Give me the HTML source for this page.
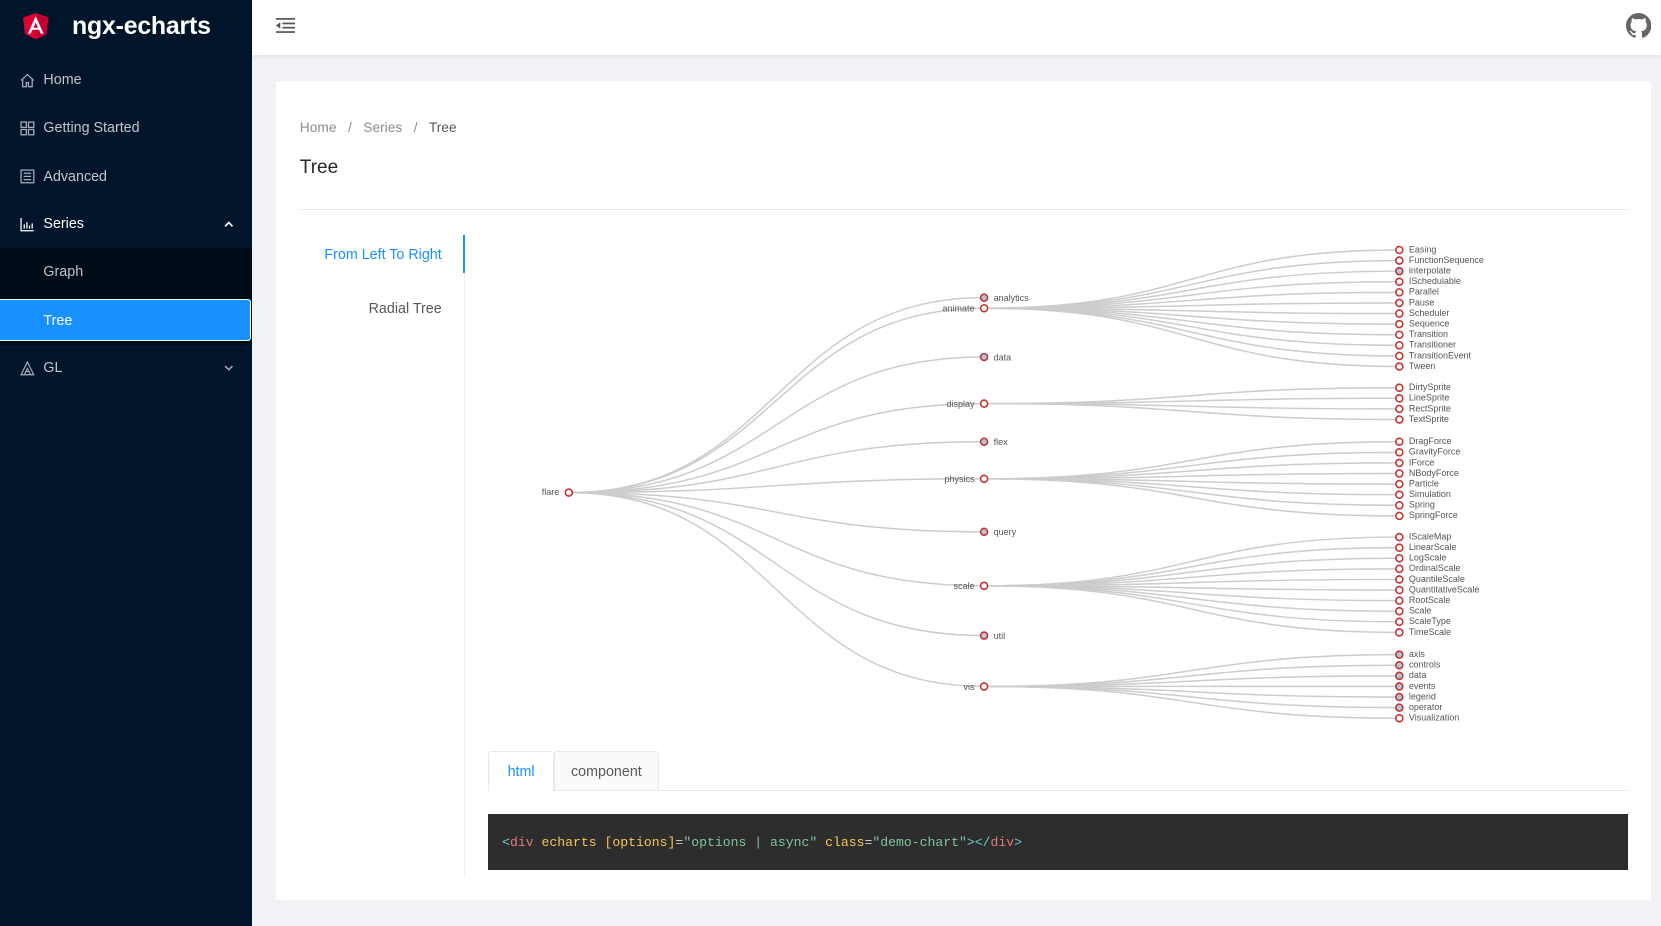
<!DOCTYPE html>
<html><head><meta charset="utf-8"><style>
html,body{margin:0;padding:0;overflow:hidden}
body{zoom:1.0593;width:1568px;height:874px;background:#f0f2f5;font-family:"Liberation Sans",sans-serif;position:relative}
.side{position:absolute;left:0;top:0;width:238px;height:874px;background:#001529}
.logo{position:absolute;left:22px;top:12px}
.brand{position:absolute;left:68px;top:11px;color:#fff;font-size:23.5px;font-weight:bold;letter-spacing:-0.2px}
.mi{position:absolute;left:0;width:238px;height:44px;color:rgba(255,255,255,.75);font-size:13.5px;line-height:46px}
.mi span{position:absolute;left:41px}
.mi svg{position:absolute;left:19px;top:16px}
.sub{position:absolute;left:0;top:234px;width:238px;height:92px;background:#000c17}
.sel{position:absolute;left:0;top:282px;width:236px;height:38px;background:#1890ff;border:1px solid #fff;border-left:none;border-radius:0 3px 3px 0;color:#fff;font-size:13.5px;line-height:40px}
.head{position:absolute;left:238px;top:0;right:0;height:52px;background:#fff;box-shadow:0 1px 4px rgba(0,21,41,.08)}
.card{position:absolute;left:261px;top:76px;width:1298px;height:774px;background:#fff}
.bc{position:absolute;left:22px;top:37px;font-size:13px;color:#8c8c8c}
.bc b{font-weight:normal;color:#595959}
.title{position:absolute;left:22px;top:72px;font-size:18px;color:#262626}
.hr{position:absolute;left:22px;right:22px;top:121px;height:1px;background:#e8e8e8}
.vl{position:absolute;left:177px;top:146px;width:1px;height:606px;background:#f0f0f0}
.va{position:absolute;left:176px;top:146px;width:2px;height:36px;background:#1890ff}
.t1{position:absolute;right:1142px;top:157px;font-size:13.5px;color:#1890ff}
.t2{position:absolute;right:1142px;top:208px;font-size:13.5px;color:#595959}
.tabs{position:absolute;left:200px;top:633px;width:1076px;height:37px;border-bottom:1px solid #e8e8e8}
.tab{position:absolute;top:0;height:36px;line-height:38px;font-size:13.5px;border:1px solid #e8e8e8;border-bottom:none;border-radius:3px 3px 0 0}
.code{position:absolute;left:200px;top:692px;width:1076px;height:53px;background:#2d2d2d;font-family:"Liberation Mono",monospace;font-size:12.4px;line-height:55px;color:#ccc}
.code>span{padding-left:13px}
svg text{font-family:"Liberation Sans",sans-serif;font-size:8.5px;fill:#555}
</style></head><body>
<div class="side">
<svg class="logo" width="24" height="25" viewBox="0 0 24 25"><path d="M12 0L0 4.3 1.8 20 12 25 22.2 20 24 4.3z" fill="#dd0031"/><path d="M12 0v25l10.2-5L24 4.3z" fill="#c3002f"/><path d="M12 3L4.6 19.5h2.7l1.5-3.7h6.4l1.5 3.7h2.7zM12 9l2.1 4.9H9.9z" fill="#fff"/></svg>
<div class="brand">ngx-echarts</div>
<div class="mi" style="top:53px"><svg width="14" height="14" viewBox="0 0 14 14" fill="none" stroke="#aab" stroke-width="1.2"><path d="M1 7L7 1.5 13 7M2.5 5.7V13h3.5V9h2v4h3.5V5.7"/></svg><span>Home</span></div>
<div class="mi" style="top:98px"><svg width="14" height="14" viewBox="0 0 14 14" fill="none" stroke="#aab" stroke-width="1.2"><rect x="1" y="1" width="5" height="5"/><rect x="8" y="1" width="5" height="5"/><rect x="1" y="8" width="5" height="5"/><rect x="8" y="8" width="5" height="5"/></svg><span>Getting Started</span></div>
<div class="mi" style="top:144px"><svg width="14" height="14" viewBox="0 0 14 14" fill="none" stroke="#aab" stroke-width="1.2"><rect x="1" y="1" width="12" height="12"/><path d="M3.5 4h7M3.5 7h7M3.5 10h7"/></svg><span>Advanced</span></div>
<div class="mi" style="top:189px;color:#fff"><svg width="14" height="14" viewBox="0 0 14 14" fill="none" stroke="#fff" stroke-width="1.2"><path d="M1 1v12h12M4 11V7M6.5 11V5M9 11V8M11.5 11V6"/></svg><span>Series</span><svg style="left:211px;top:20px" width="9" height="6" viewBox="0 0 9 6"><path d="M1 5l3.5-3.5L8 5" stroke="#fff" stroke-width="1.6" fill="none"/></svg></div>
<div class="sub"></div>
<div class="mi" style="top:234px"><span>Graph</span></div>
<div class="sel"><span style="position:absolute;left:41px">Tree</span></div>
<div class="mi" style="top:325px"><svg width="14" height="14" viewBox="0 0 14 14" fill="none" stroke="#aab" stroke-width="1.1"><path d="M7 1L1 13h12zM4 13l3-6 3 6M5.5 10h3"/></svg><span>GL</span><svg style="left:211px;top:20px" width="9" height="6" viewBox="0 0 9 6"><path d="M1 1l3.5 3.5L8 1" stroke="#aab" stroke-width="1.4" fill="none"/></svg></div>
</div>
<div class="head">
<svg style="position:absolute;left:23px;top:16px" width="18" height="16" viewBox="0 0 18 16" fill="#555"><rect x="0" y="1" width="18" height="1.6"/><rect x="6" y="5.3" width="12" height="1.6"/><rect x="6" y="9.3" width="12" height="1.6"/><rect x="0" y="13.4" width="18" height="1.6"/><path d="M0 8l4-3v6z"/></svg>
<svg style="position:absolute;left:1297px;top:12px" width="24" height="24" viewBox="0 0 16 16" fill="#666"><path d="M8 0C3.6 0 0 3.6 0 8c0 3.5 2.3 6.5 5.5 7.6.4.1.5-.2.5-.4v-1.4c-2.2.5-2.7-1-2.7-1-.4-.9-.9-1.2-.9-1.2-.7-.5.1-.5.1-.5.8.1 1.2.8 1.2.8.7 1.2 1.9.9 2.3.7.1-.5.3-.9.5-1.1-1.8-.2-3.600-.9-3.6-4 0-.9.3-1.6.8-2.1-.1-.2-.4-1 .1-2.1 0 0 .7-.2 2.2.8.6-.2 1.3-.3 2-.3s1.4.1 2 .3c1.5-1 2.2-.8 2.2-.8.4 1.1.2 1.9.1 2.1.5.6.8 1.3.8 2.1 0 3.1-1.9 3.8-3.6 4 .3.3.6.8.6 1.5v2.2c0 .2.1.5.6.4C13.7 14.5 16 11.5 16 8c0-4.4-3.6-8-8-8z"/></svg>
</div>
<div class="card">
<div class="bc">Home &nbsp;&nbsp;/&nbsp;&nbsp; Series &nbsp;&nbsp;/&nbsp;&nbsp; <b>Tree</b></div>
<div class="title">Tree</div>
<div class="hr"></div>
<div class="vl"></div><div class="va"></div>
<div class="t1">From Left To Right</div>
<div class="t2">Radial Tree</div>
<div class="tabs">
<div class="tab" style="left:0;width:60px;text-align:center;color:#1890ff;background:#fff;height:37px">html</div>
<div class="tab" style="left:62px;width:97px;text-align:center;color:#595959;background:#fafafa">component</div>
</div>
<div class="code"><span><span style="color:#67cdcc">&lt;</span><span style="color:#e2777a">div</span> <span style="color:#f8c555">echarts [options]</span>=<span style="color:#7ec699">"options | async"</span> <span style="color:#f8c555">class</span>=<span style="color:#7ec699">"demo-chart"</span><span style="color:#67cdcc">&gt;&lt;/</span><span style="color:#e2777a">div</span><span style="color:#67cdcc">&gt;</span></span></div>
</div>
<svg style="position:absolute;left:0;top:0" width="1568" height="874" viewBox="0 0 1568 874">
<g fill="none" stroke="#ccc" stroke-width="1.4">
<path d="M537 465C733 465 733 281 929 281"/><path d="M537 465C733 465 733 291 929 291"/><path d="M537 465C733 465 733 337 929 337"/><path d="M537 465C733 465 733 381 929 381"/><path d="M537 465C733 465 733 417 929 417"/><path d="M537 465C733 465 733 452 929 452"/><path d="M537 465C733 465 733 502 929 502"/><path d="M537 465C733 465 733 553 929 553"/><path d="M537 465C733 465 733 600 929 600"/><path d="M537 465C733 465 733 648 929 648"/>
<path d="M929 291C1125 291 1125 236 1321 236"/><path d="M929 291C1125 291 1125 246 1321 246"/><path d="M929 291C1125 291 1125 256 1321 256"/><path d="M929 291C1125 291 1125 266 1321 266"/><path d="M929 291C1125 291 1125 276 1321 276"/><path d="M929 291C1125 291 1125 286 1321 286"/><path d="M929 291C1125 291 1125 296 1321 296"/><path d="M929 291C1125 291 1125 306 1321 306"/><path d="M929 291C1125 291 1125 316 1321 316"/><path d="M929 291C1125 291 1125 326 1321 326"/><path d="M929 291C1125 291 1125 336 1321 336"/><path d="M929 291C1125 291 1125 346 1321 346"/>
<path d="M929 381C1125 381 1125 366 1321 366"/><path d="M929 381C1125 381 1125 376 1321 376"/><path d="M929 381C1125 381 1125 386 1321 386"/><path d="M929 381C1125 381 1125 396 1321 396"/>
<path d="M929 452C1125 452 1125 417 1321 417"/><path d="M929 452C1125 452 1125 427 1321 427"/><path d="M929 452C1125 452 1125 437 1321 437"/><path d="M929 452C1125 452 1125 447 1321 447"/><path d="M929 452C1125 452 1125 457 1321 457"/><path d="M929 452C1125 452 1125 467 1321 467"/><path d="M929 452C1125 452 1125 477 1321 477"/><path d="M929 452C1125 452 1125 487 1321 487"/>
<path d="M929 553C1125 553 1125 507 1321 507"/><path d="M929 553C1125 553 1125 517 1321 517"/><path d="M929 553C1125 553 1125 527 1321 527"/><path d="M929 553C1125 553 1125 537 1321 537"/><path d="M929 553C1125 553 1125 547 1321 547"/><path d="M929 553C1125 553 1125 557 1321 557"/><path d="M929 553C1125 553 1125 567 1321 567"/><path d="M929 553C1125 553 1125 577 1321 577"/><path d="M929 553C1125 553 1125 587 1321 587"/><path d="M929 553C1125 553 1125 597 1321 597"/>
<path d="M929 648C1125 648 1125 618 1321 618"/><path d="M929 648C1125 648 1125 628 1321 628"/><path d="M929 648C1125 648 1125 638 1321 638"/><path d="M929 648C1125 648 1125 648 1321 648"/><path d="M929 648C1125 648 1125 658 1321 658"/><path d="M929 648C1125 648 1125 668 1321 668"/><path d="M929 648C1125 648 1125 678 1321 678"/>
</g>
<g stroke="#c23531" stroke-width="1.5" fill="#fff">
<circle cx="537" cy="465" r="3.3"/>
<circle cx="929" cy="291" r="3.3"/><circle cx="929" cy="381" r="3.3"/><circle cx="929" cy="452" r="3.3"/><circle cx="929" cy="553" r="3.3"/><circle cx="929" cy="648" r="3.3"/>
<g fill="#b0c4de"><circle cx="929" cy="281" r="3.3"/><circle cx="929" cy="337" r="3.3"/><circle cx="929" cy="417" r="3.3"/><circle cx="929" cy="502" r="3.3"/><circle cx="929" cy="600" r="3.3"/>
<circle cx="1321" cy="256" r="3.3"/><circle cx="1321" cy="618" r="3.3"/><circle cx="1321" cy="628" r="3.3"/><circle cx="1321" cy="638" r="3.3"/><circle cx="1321" cy="648" r="3.3"/><circle cx="1321" cy="658" r="3.3"/><circle cx="1321" cy="668" r="3.3"/></g>
<circle cx="1321" cy="236" r="3.3"/><circle cx="1321" cy="246" r="3.3"/><circle cx="1321" cy="266" r="3.3"/><circle cx="1321" cy="276" r="3.3"/><circle cx="1321" cy="286" r="3.3"/><circle cx="1321" cy="296" r="3.3"/><circle cx="1321" cy="306" r="3.3"/><circle cx="1321" cy="316" r="3.3"/><circle cx="1321" cy="326" r="3.3"/><circle cx="1321" cy="336" r="3.3"/><circle cx="1321" cy="346" r="3.3"/>
<circle cx="1321" cy="366" r="3.3"/><circle cx="1321" cy="376" r="3.3"/><circle cx="1321" cy="386" r="3.3"/><circle cx="1321" cy="396" r="3.3"/>
<circle cx="1321" cy="417" r="3.3"/><circle cx="1321" cy="427" r="3.3"/><circle cx="1321" cy="437" r="3.3"/><circle cx="1321" cy="447" r="3.3"/><circle cx="1321" cy="457" r="3.3"/><circle cx="1321" cy="467" r="3.3"/><circle cx="1321" cy="477" r="3.3"/><circle cx="1321" cy="487" r="3.3"/>
<circle cx="1321" cy="507" r="3.3"/><circle cx="1321" cy="517" r="3.3"/><circle cx="1321" cy="527" r="3.3"/><circle cx="1321" cy="537" r="3.3"/><circle cx="1321" cy="547" r="3.3"/><circle cx="1321" cy="557" r="3.3"/><circle cx="1321" cy="567" r="3.3"/><circle cx="1321" cy="577" r="3.3"/><circle cx="1321" cy="587" r="3.3"/><circle cx="1321" cy="597" r="3.3"/>
<circle cx="1321" cy="678" r="3.3"/>
</g>
<g dominant-baseline="middle">
<g text-anchor="end"><text x="528" y="465">flare</text><text x="920" y="292">animate</text><text x="920" y="382">display</text><text x="920" y="453">physics</text><text x="920" y="554">scale</text><text x="920" y="649">vis</text></g>
<text x="938" y="282">analytics</text><text x="938" y="338">data</text><text x="938" y="418">flex</text><text x="938" y="503">query</text><text x="938" y="601">util</text>
<g transform="translate(1330 0)">
<text y="236">Easing</text><text y="246">FunctionSequence</text><text y="256">interpolate</text><text y="266">ISchedulable</text><text y="276">Parallel</text><text y="286">Pause</text><text y="296">Scheduler</text><text y="306">Sequence</text><text y="316">Transition</text><text y="326">Transitioner</text><text y="336">TransitionEvent</text><text y="346">Tween</text>
<text y="366">DirtySprite</text><text y="376">LineSprite</text><text y="386">RectSprite</text><text y="396">TextSprite</text>
<text y="417">DragForce</text><text y="427">GravityForce</text><text y="437">IForce</text><text y="447">NBodyForce</text><text y="457">Particle</text><text y="467">Simulation</text><text y="477">Spring</text><text y="487">SpringForce</text>
<text y="507">IScaleMap</text><text y="517">LinearScale</text><text y="527">LogScale</text><text y="537">OrdinalScale</text><text y="547">QuantileScale</text><text y="557">QuantitativeScale</text><text y="567">RootScale</text><text y="577">Scale</text><text y="587">ScaleType</text><text y="597">TimeScale</text>
<text y="618">axis</text><text y="628">controls</text><text y="638">data</text><text y="648">events</text><text y="658">legend</text><text y="668">operator</text><text y="678">Visualization</text>
</g></g>
</svg>
</body></html>
